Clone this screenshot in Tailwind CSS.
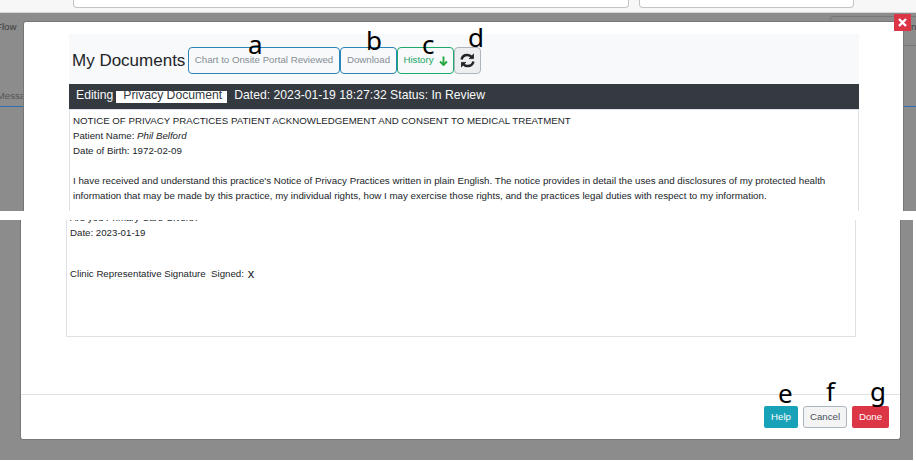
<!DOCTYPE html>
<html>
<head>
<meta charset="utf-8">
<script src="https://cdn.jsdelivr.net/npm/@tailwindcss/browser@4"></script>
</head>
<body class="bg-white overflow-hidden font-['Liberation_Sans',sans-serif]">
<div class="relative w-[916px] h-[461px] overflow-hidden bg-white">

  <!-- upper capture -->
  <section class="relative h-[211px] bg-[#8c8c8c] overflow-hidden">
    <div class="h-[13px] bg-[#f7f7f7] border-b border-[#d5d5d5] flex gap-[10px] pl-[73px]">
      <div class="w-[556px] h-[8px] bg-white border-x border-b border-[#c4c4c4] rounded-b-[4px]"></div>
      <div class="w-[215px] h-[8px] bg-white border-x border-b border-[#c4c4c4] rounded-b-[4px]"></div>
    </div>
    <div class="absolute left-[-4px] top-[21px] text-[9.7px] leading-[12px] text-[#3a3a3a]">Flow</div>
    <div class="absolute left-[-6px] top-[90px] text-[9.7px] leading-[12px] text-[#555]">&nbsp;Messa</div>
    <div class="absolute left-0 top-[106px] w-full h-px bg-[#2f6eb0]"></div>
    <div class="absolute left-[830px] top-[16px] w-[90px] h-[30px] border border-[#777] rounded-[3px]"></div>
    <div class="absolute left-[911px] top-[21px] text-[9.7px] leading-[12px] text-[#3a3a3a]">n</div>

    <div class="absolute left-[23px] top-[21px] w-[881px] h-[300px] bg-white rounded-[3px] border-x border-t border-[#777] pt-[12px] pl-[45px]">
      <div class="w-[790px] h-[50px] bg-[#f8f9fa] flex items-center pt-[3px] pl-[3px]">
        <span class="text-[17px] leading-[24px] text-[#212529] w-[116px]">My Documents</span>
        <span class="h-[27px] w-[152px] flex items-center justify-center border border-[#2a85b8] rounded-[4px] text-[9.7px] text-[#868e96]">Chart to Onsite Portal Reviewed</span>
        <span class="h-[27px] w-[57px] flex items-center justify-center border border-[#2a85b8] rounded-[4px] text-[9.7px] text-[#868e96]">Download</span>
        <span class="h-[27px] w-[57px] flex items-center justify-center gap-[5px] border border-[#1aaa6a] rounded-[4px] text-[9.7px] text-[#20a868]">History
          <svg width="9" height="10" viewBox="0 0 9 10" fill="none" stroke="#28a745" stroke-width="1.9"><path d="M4.5 0.5V9M1 5.5L4.5 9L8 5.5"/></svg>
        </span>
        <span class="h-[27px] w-[27px] flex items-center justify-center border border-[#adb5bd] rounded-[4px] bg-[#eceeef]">
          <svg width="15" height="15" viewBox="0 0 14 14" fill="none" stroke="#212529" stroke-width="2.3"><path d="M1.5 6C2 3.5 4.2 1.8 6.8 1.8C8.6 1.8 10.2 2.7 11.2 4"/><path d="M12.5 8C12 10.5 9.8 12.2 7.2 12.2C5.4 12.2 3.8 11.3 2.8 10"/><path d="M12.6 0.8V5.2H8.4" fill="#212529" stroke-width="0.8"/><path d="M1.4 13.2V8.8H5.6" fill="#212529" stroke-width="0.8"/></svg>
        </span>
      </div>
      <div class="w-[790px] h-[25px] bg-[#343a40] flex items-center pl-[7px] pb-[2px] text-[12.2px] text-[#f8f9fa]">
        <span>Editing</span>
        <span class="ml-[3px] mt-[2px] w-[111px] h-[12px] bg-white text-[#343a40] leading-[9px] pl-[7px]">Privacy Document</span>
        <span class="ml-[7px]">Dated: 2023-01-19 18:27:32 Status: In Review</span>
      </div>
      <div class="w-[790px] h-[120px] bg-white border-x border-t border-[#dee2e6] pl-[3px] pt-[3px] text-[9.7px] leading-[15px] text-[#212529]">
        <p>NOTICE OF PRIVACY PRACTICES PATIENT ACKNOWLEDGEMENT AND CONSENT TO MEDICAL TREATMENT</p>
        <p>Patient Name: <em>Phil Belford</em></p>
        <p>Date of Birth: 1972-02-09</p>
        <p class="mt-[15px] w-[770px] text-[9.75px]">I have received and understand this practice's Notice of Privacy Practices written in plain English. The notice provides in detail the uses and disclosures of my protected health information that may be made by this practice, my individual rights, how I may exercise those rights, and the practices legal duties with respect to my information.</p>
      </div>
    </div>

    <div class="absolute left-[894px] top-[14px] w-[17px] h-[17px] bg-[#dc3545] flex items-center justify-center">
      <svg width="9" height="9" viewBox="0 0 9 9" stroke="#fff" stroke-width="2.4"><path d="M1 1L8 8M8 1L1 8"/></svg>
    </div>
  </section>

  <div class="h-[9px] bg-white"></div>

  <!-- lower capture -->
  <section class="relative h-[240px] w-[913px] bg-[#8c8c8c] overflow-hidden">
    <div class="absolute left-[20px] top-[-60px] w-[881px] h-[280px] bg-white rounded-[3px] border-b border-x border-[#777] flex flex-col">
      <div class="h-[177px] pt-[60px] ml-[45px] w-[790px] border-x border-b border-[#dee2e6] pl-[3px] text-[9.7px] leading-[15px] text-[#212529] overflow-hidden">
        <div class="h-[117px] overflow-hidden">
          <p class="mt-[-10px]">Are you Primary Care Givers?</p>
          <p>Date: 2023-01-19</p>
          <p class="mt-[26px]">Clinic Representative Signature &nbsp;Signed: <span class="inline-block ml-px translate-y-[1px] text-[13px] leading-[10px]">x</span></p>
        </div>
      </div>
      <div class="mt-[57px] border-t border-[#dee2e6] flex justify-end gap-[5px] pt-[11px] pr-[11px]">
        <span class="h-[22px] w-[34px] flex items-center justify-center bg-[#17a2b8] rounded-[2px] text-[9.7px] text-white">Help</span>
        <span class="h-[22px] w-[44px] flex items-center justify-center bg-[#f4f4f5] border border-[#adb5bd] rounded-[3px] text-[9.7px] text-[#495057]">Cancel</span>
        <span class="h-[22px] w-[37px] flex items-center justify-center bg-[#dc3545] rounded-[2px] text-[9.7px] text-white">Done</span>
      </div>
    </div>
  </section>

  <!-- annotation letters -->
  <span class="absolute left-[248px] top-[26px] text-[26px] leading-[36px] text-black font-['Noto_Sans',sans-serif]">a</span>
  <span class="absolute left-[366px] top-[22px] text-[26px] leading-[36px] text-black font-['Noto_Sans',sans-serif]">b</span>
  <span class="absolute left-[422px] top-[26px] text-[26px] leading-[36px] text-black font-['Noto_Sans',sans-serif]">c</span>
  <span class="absolute left-[468px] top-[19px] text-[26px] leading-[36px] text-black font-['Noto_Sans',sans-serif]">d</span>
  <span class="absolute left-[778px] top-[375px] text-[26px] leading-[36px] text-black font-['Noto_Sans',sans-serif]">e</span>
  <span class="absolute left-[826px] top-[373px] text-[26px] leading-[36px] text-black font-['Noto_Sans',sans-serif]">f</span>
  <span class="absolute left-[870px] top-[373px] text-[26px] leading-[36px] text-black font-['Noto_Sans',sans-serif]">g</span>
</div>
</body>
</html>
